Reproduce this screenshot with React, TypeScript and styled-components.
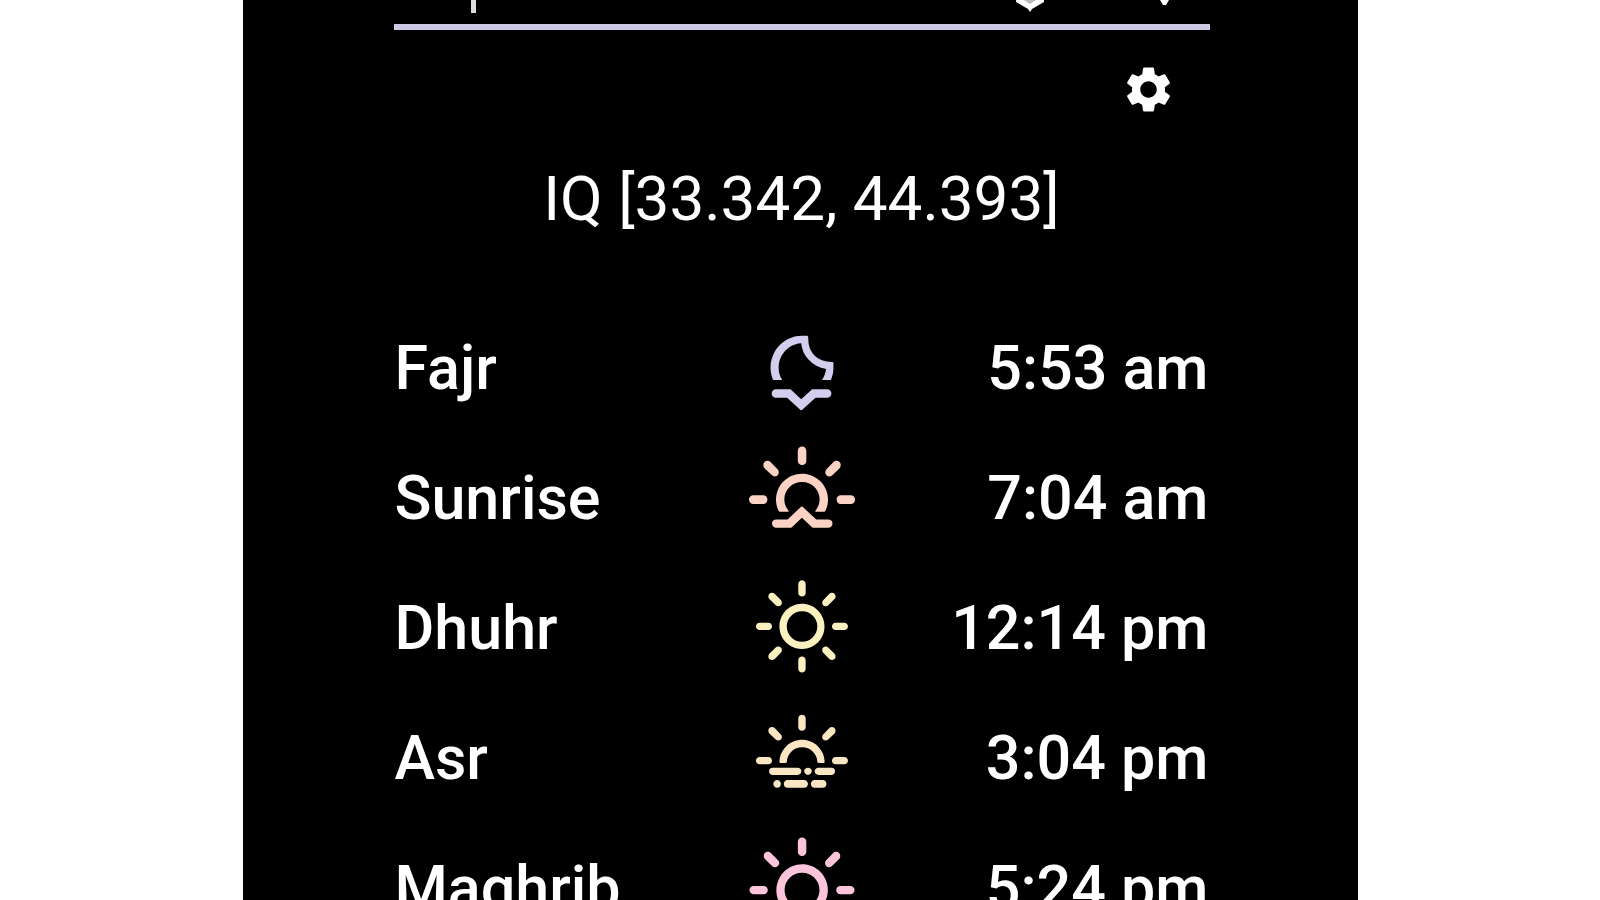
import React from "react";
import styled, { createGlobalStyle } from "styled-components";
import { MdSettings } from "react-icons/md";
import { WiMoonset, WiSunrise, WiDaySunny, WiDayHaze, WiSunset } from "react-icons/wi";
import type { IconType } from "react-icons";

const GlobalStyle = createGlobalStyle`
  * { box-sizing: border-box; }
  body { margin: 0; background: #fff; font-family: Roboto, "Liberation Sans", sans-serif; }
`;

const Page = styled.div`
  display: flex;
  justify-content: center;
  height: 100vh;
  overflow: hidden;
`;

const Panel = styled.main`
  width: 100%;
  max-width: 1115px;
  min-height: 100%;
  padding: 0 148px 0 151px;
  background: #000;
  color: #fff;
`;

const SearchBar = styled.header`
  display: flex;
  align-items: flex-start;
  justify-content: space-between;
  height: 30px;
  padding: 0 40px 0 77px;
  border-bottom: 6px solid #cfc8e4;
`;

const Caret = styled.span`
  width: 5px;
  height: 13px;
  background: #dcdcdc;
`;

const SearchIcons = styled.svg`
  display: block;
  width: 160px;
  height: 14px;
`;

const Toolbar = styled.div`
  display: flex;
  justify-content: flex-end;
  padding: 32px 34px 0 0;
`;

const SettingsButton = styled.button`
  display: block;
  padding: 0;
  border: 0;
  background: none;
  color: #fff;
  svg { display: block; }
`;

const Location = styled.h1`
  margin: 44px 0 66px;
  font-size: 62px;
  font-weight: 400;
  line-height: 76px;
  text-align: center;
  white-space: nowrap;
`;

const Times = styled.table`
  width: 100%;
  border-collapse: collapse;
  table-layout: fixed;
  font-size: 61px;
  line-height: 70px;
`;

const Row = styled.tr`
  height: 130px;
`;

const Name = styled.th`
  padding: 0 1px;
  font-weight: 500;
  text-align: left;
`;

const IconCell = styled.td<{ $color: string }>`
  width: 130px;
  padding: 0;
  color: ${(p) => p.$color};
  svg { display: block; }
`;

const Time = styled.td`
  padding: 0 1px;
  font-weight: 500;
  text-align: right;
  white-space: nowrap;
`;

const prayers: { name: string; time: string; color: string; Icon: IconType }[] = [
  { name: "Fajr", time: "5:53 am", color: "#d5cdee", Icon: WiMoonset },
  { name: "Sunrise", time: "7:04 am", color: "#fbd3c4", Icon: WiSunrise },
  { name: "Dhuhr", time: "12:14 pm", color: "#fbf0c0", Icon: WiDaySunny },
  { name: "Asr", time: "3:04 pm", color: "#fbe6c4", Icon: WiDayHaze },
  { name: "Maghrib", time: "5:24 pm", color: "#fbc4da", Icon: WiSunset },
];

export default function App() {
  return (
    <Page>
      <GlobalStyle />
      <Panel>
        <SearchBar>
          <Caret />
          <SearchIcons viewBox="0 0 160 14" aria-hidden="true">
            <path d="M6 0H34V2L22 9L20 12L18 9L6 2Z" fill="#fff" />
            <path d="M14 0H26L20 4Z" fill="#bbb" />
            <path d="M150 0H159L156 5H153Z" fill="#fff" />
          </SearchIcons>
        </SearchBar>
        <Toolbar>
          <SettingsButton type="button" aria-label="Settings">
            <MdSettings size={55} />
          </SettingsButton>
        </Toolbar>
        <Location>IQ [33.342, 44.393]</Location>
        <Times>
          <tbody>
            {prayers.map(({ name, time, color, Icon }) => (
              <Row key={name}>
                <Name scope="row">{name}</Name>
                <IconCell $color={color}>
                  <Icon size={130} />
                </IconCell>
                <Time>{time}</Time>
              </Row>
            ))}
          </tbody>
        </Times>
      </Panel>
    </Page>
  );
}
